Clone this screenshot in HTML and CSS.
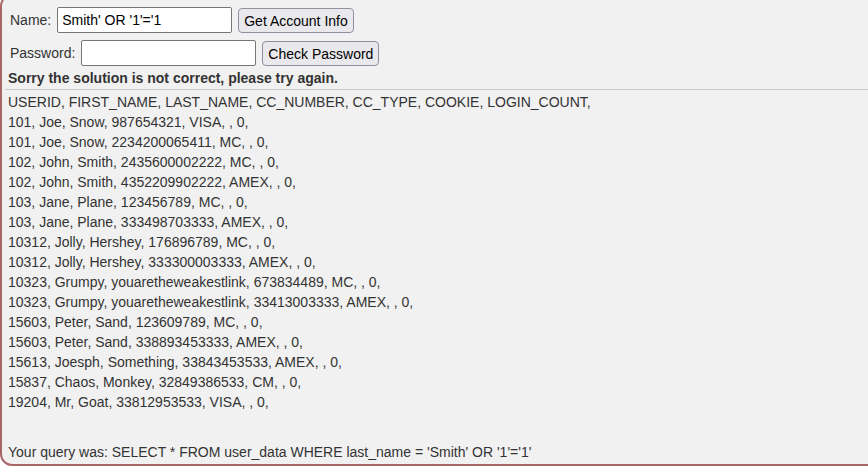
FILE: index.html
```html
<!DOCTYPE html>
<html>
<head>
<meta charset="utf-8">
<title>Attack</title>
<link rel="stylesheet" href="styles.css">
</head>
<body>
<div class="attack-container">
  <form class="attack-form">
    <div class="form-row">
      <label class="field-label" for="name">Name:</label>
      <input class="field-input" id="name" type="text" value="Smith' OR '1'='1">
      <button class="btn" type="button">Get Account Info</button>
    </div>
    <div class="form-row">
      <label class="field-label" for="password">Password:</label>
      <input class="field-input" id="password" type="password">
      <button class="btn" type="button">Check Password</button>
    </div>
  </form>
  <div class="feedback">Sorry the solution is not correct, please try again.</div>
  <div class="divider"></div>
  <div class="output">
    <p class="rows">USERID, FIRST_NAME, LAST_NAME, CC_NUMBER, CC_TYPE, COOKIE, LOGIN_COUNT, <br>101, Joe, Snow, 987654321, VISA, , 0, <br>101, Joe, Snow, 2234200065411, MC, , 0, <br>102, John, Smith, 2435600002222, MC, , 0, <br>102, John, Smith, 4352209902222, AMEX, , 0, <br>103, Jane, Plane, 123456789, MC, , 0, <br>103, Jane, Plane, 333498703333, AMEX, , 0, <br>10312, Jolly, Hershey, 176896789, MC, , 0, <br>10312, Jolly, Hershey, 333300003333, AMEX, , 0, <br>10323, Grumpy, youaretheweakestlink, 673834489, MC, , 0, <br>10323, Grumpy, youaretheweakestlink, 33413003333, AMEX, , 0, <br>15603, Peter, Sand, 123609789, MC, , 0, <br>15603, Peter, Sand, 338893453333, AMEX, , 0, <br>15613, Joesph, Something, 33843453533, AMEX, , 0, <br>15837, Chaos, Monkey, 32849386533, CM, , 0, <br>19204, Mr, Goat, 33812953533, VISA, , 0, </p>
    <p class="query">Your query was: SELECT * FROM user_data WHERE last_name = 'Smith' OR '1'='1'</p>
  </div>
</div>
</body>
</html>
```

FILE: styles.css
```css
html, body {
  margin: 0;
  padding: 0;
  overflow: hidden;
  background: #ffffff;
}

body {
  font-family: "Liberation Sans", Arial, Helvetica, sans-serif;
  font-size: 14px;
  line-height: 20px;
  color: #333333;
}

.attack-container {
  width: 900px;
  margin-top: -6px;
  border: 2px solid #aa6666;
  border-radius: 12px;
  background: #f1f1f1;
  padding: 0 0 2px 6px;
}

.attack-form {
  margin: 0;
  padding: 11px 0 0 2px;
  display: flex;
  flex-direction: column;
  gap: 7px;
}

.form-row {
  display: flex;
  align-items: flex-end;
  gap: 6px;
}

.field-label {
  color: #333333;
  line-height: 20px;
  align-self: center;
}

.field-input {
  box-sizing: border-box;
  width: 175px;
  height: 26px;
  margin: 0;
  padding: 1px 4px;
  border: 1px solid #767676;
  border-radius: 2px;
  background: #ffffff;
  color: #000000;
  font-family: "Liberation Sans", Arial, sans-serif;
  font-size: 14px;
}

.btn {
  box-sizing: border-box;
  height: 25px;
  margin: 0;
  padding: 0 5px;
  border: 1px solid #8f8f9d;
  border-radius: 4px;
  background: #e9e9ed;
  color: #000000;
  font-family: "Liberation Sans", Arial, sans-serif;
  font-size: 14px;
}

.feedback {
  margin-top: 2px;
  font-weight: bold;
}

.divider {
  margin: 1px 0 0 -3px;
  border-top: 1px solid #cccccc;
}

.output {
  margin-top: 2px;
}

.rows {
  margin: 0;
}

.query {
  margin: 30px 0 0 0;
}
```
